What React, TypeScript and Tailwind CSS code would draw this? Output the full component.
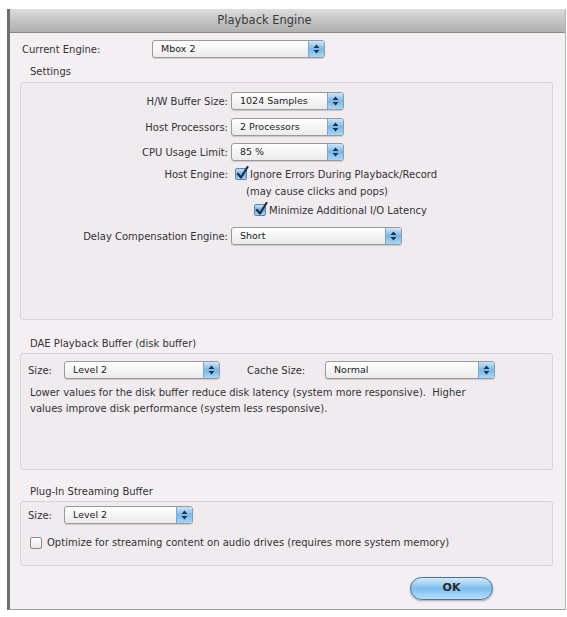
import React from 'react'

const font = { fontFamily: '"DejaVu Sans", Verdana, sans-serif' }

function Arrows() {
  return (
    <svg width="7" height="10" viewBox="0 0 7 10">
      <path d="M3.5 0.5 L6.5 4 L0.5 4 Z" fill="#1d3550" />
      <path d="M0.5 6 L6.5 6 L3.5 9.5 Z" fill="#1d3550" />
    </svg>
  )
}

function Select({ value, w }: { value: string; w: string }) {
  return (
    <div
      className={`${w} h-[18px] flex items-stretch rounded-[3px] border border-[#9a9a9a] bg-gradient-to-b from-white to-[#ebebeb] shadow-[0_1px_1px_rgba(0,0,0,0.15)]`}
    >
      <span className="flex-1 pl-[8px] text-[9.5px] leading-[16px] text-[#222]">{value}</span>
      <span className="w-[16px] flex items-center justify-center rounded-r-[2px] border-l border-[#7fa7c8] bg-gradient-to-b from-[#cbe6fb] via-[#7ab8e8] to-[#a9d5f7]">
        <Arrows />
      </span>
    </div>
  )
}

function Check({ on }: { on: boolean }) {
  if (!on)
    return <span className="block w-[12px] h-[12px] rounded-[2px] border border-[#8a8a8a] bg-gradient-to-b from-white to-[#e6e6e6] shrink-0" />
  return (
    <span className="block w-[12px] h-[12px] rounded-[2px] border border-[#5a86ad] bg-gradient-to-b from-[#c5e3fa] via-[#6fb0e3] to-[#a4d2f5] shrink-0 relative">
      <svg className="absolute -top-[3px] left-0" width="13" height="14" viewBox="0 0 13 14">
        <path d="M2 8 L5 11.5 L11.5 1" stroke="#1e2f44" strokeWidth="2.2" fill="none" strokeLinecap="round" strokeLinejoin="round" />
      </svg>
    </span>
  )
}

function Row({ label, children }: { label: string; children: React.ReactNode }) {
  return (
    <div className="flex items-center h-[18px]">
      <span className="w-[210px] pr-[3px] text-right text-[10px] text-[#333]">{label}</span>
      {children}
    </div>
  )
}

export default function App() {
  return (
    <div className="w-[567px] h-[617px] bg-white pt-[9px] pl-[7px]" style={font}>
      <div className="w-[559px] h-[601px] flex flex-col bg-[#f3eff3] border-l-[3px] border-l-[#6e6e6e] border-r border-r-[#b5b5b5] border-b border-b-[#9c9c9c]">
        {/* title bar */}
        <div className="h-[24px] shrink-0 flex items-center justify-center bg-gradient-to-b from-[#dedede] via-[#c4c4c4] to-[#b0b0b0] border-b border-[#8a8a8a]">
          <span className="text-[11.5px] text-[#3a3a3a] pr-[46px]">Playback Engine</span>
        </div>

        <div className="flex flex-col pl-[10px] pr-[3px]">
          {/* current engine */}
          <div className="flex items-center h-[18px] mt-[7px]">
            <span className="w-[132px] pl-[2px] text-[10px] text-[#333]">Current Engine:</span>
            <Select value="Mbox 2" w="w-[173px]" />
          </div>

          <span className="mt-[8px] ml-[10px] text-[10px] text-[#333] leading-[12px]">Settings</span>

          {/* settings box */}
          <div className="mt-[4px] h-[238px] w-[533px] rounded-[3px] border border-[#d9d5d9] bg-[#efebef] pt-[9px] flex flex-col">
            <Row label="H/W Buffer Size:">
              <Select value="1024 Samples" w="w-[113px]" />
            </Row>
            <div className="h-[8px]" />
            <Row label="Host Processors:">
              <Select value="2 Processors" w="w-[113px]" />
            </Row>
            <div className="h-[7px]" />
            <Row label="CPU Usage Limit:">
              <Select value="85 %" w="w-[113px]" />
            </Row>
            <div className="h-[5px]" />
            <div className="flex items-center h-[16px]">
              <span className="w-[210px] pr-[3px] text-right text-[10px] text-[#333]">Host Engine:</span>
              <span className="ml-[4px]">
                <Check on />
              </span>
              <span className="ml-[3px] text-[10px] text-[#333]">Ignore Errors During Playback/Record</span>
            </div>
            <span className="ml-[225px] mt-[4px] text-[10px] text-[#333] leading-[12px]">(may cause clicks and pops)</span>
            <div className="flex items-center h-[16px] mt-[4px] ml-[233px]">
              <Check on />
              <span className="ml-[3px] text-[10px] text-[#333]">Minimize Additional I/O Latency</span>
            </div>
            <div className="h-[9px]" />
            <Row label="Delay Compensation Engine:">
              <Select value="Short" w="w-[171px]" />
            </Row>
          </div>

          <span className="mt-[18px] ml-[10px] text-[10px] text-[#333] leading-[12px]">DAE Playback Buffer (disk buffer)</span>

          {/* DAE box */}
          <div className="mt-[3px] h-[117px] w-[533px] rounded-[3px] border border-[#d9d5d9] bg-[#efebef] pt-[7px] px-[7px] flex flex-col">
            <div className="flex items-center h-[18px]">
              <span className="w-[36px] text-[10px] text-[#333]">Size:</span>
              <Select value="Level 2" w="w-[156px]" />
              <span className="w-[78px] ml-[27px] text-[10px] text-[#333]">Cache Size:</span>
              <Select value="Normal" w="w-[170px]" />
            </div>
            <p className="mt-[6px] ml-[2px] text-[10px] leading-[16px] text-[#333]">
              Lower values for the disk buffer reduce disk latency (system more responsive).&nbsp; Higher
              <br />
              values improve disk performance (system less responsive).
            </p>
          </div>

          <span className="mt-[16px] ml-[10px] text-[10px] text-[#333] leading-[12px]">Plug-In Streaming Buffer</span>

          {/* plug-in box */}
          <div className="mt-[3px] h-[65px] w-[533px] rounded-[3px] border border-[#d9d5d9] bg-[#efebef] pt-[4px] px-[7px] flex flex-col">
            <div className="flex items-center h-[18px]">
              <span className="w-[36px] text-[10px] text-[#333]">Size:</span>
              <Select value="Level 2" w="w-[129px]" />
            </div>
            <div className="flex items-center mt-[11px] ml-[2px]">
              <Check on={false} />
              <span className="ml-[5px] text-[10px] text-[#333]">
                Optimize for streaming content on audio drives (requires more system memory)
              </span>
            </div>
          </div>

          {/* OK */}
          <div className="flex justify-end mt-[11px] pr-[69px]">
            <button className="w-[83px] h-[23px] rounded-full border border-[#4d6f90] bg-gradient-to-b from-[#d2ebfc] via-[#7cbdef] to-[#b6dffb] text-[11px] font-bold text-[#2a2a2a] shadow-[0_1px_2px_rgba(0,0,0,0.3)]">
              OK
            </button>
          </div>
        </div>
      </div>
    </div>
  )
}
